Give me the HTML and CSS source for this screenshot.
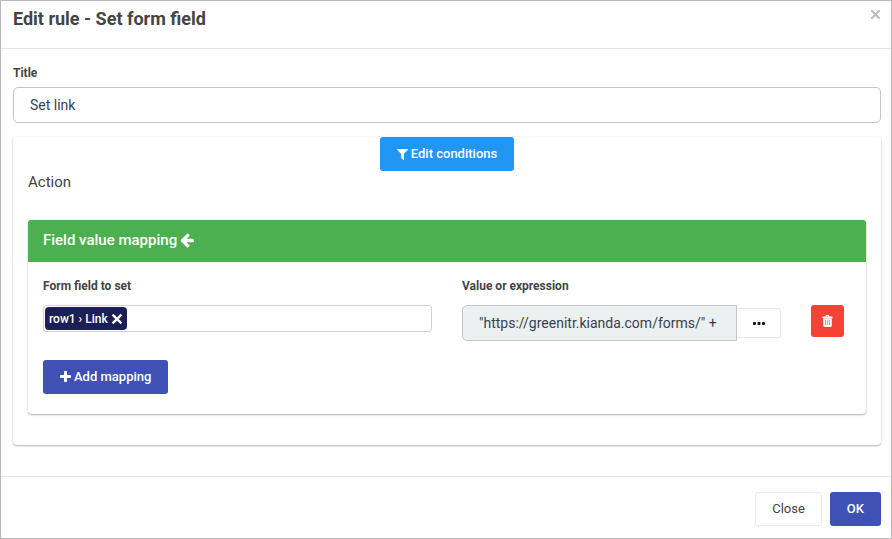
FILE: index.html
```html
<!DOCTYPE html>
<html lang="en">
<head>
<meta charset="utf-8">
<title>Edit rule - Set form field</title>
<meta name="viewport" content="width=device-width, initial-scale=1">
<link rel="stylesheet" href="styles.css">
</head>
<body>
<form class="dialog">
  <header class="dialog-header">
    <h1 class="dialog-title">Edit rule - Set form field</h1>
    <button type="button" class="dismiss" aria-label="Dismiss">
      <svg class="dismiss-icon" viewBox="0 0 10 10" aria-hidden="true"><path d="M1.2 1.2l7.6 7.6M8.8 1.2l-7.6 7.6"/></svg>
    </button>
  </header>

  <main class="dialog-body">
    <label class="label" for="title">Title</label>
    <input class="control" id="title" type="text" value="Set link">

    <section class="card">
      <div class="card-top">
        <button type="button" class="button button-info">
          <svg class="icon" viewBox="190 0 1412 1792" aria-hidden="true"><path d="M1595 295q17 41-14 70l-493 493v742q0 42-39 59-13 5-25 5-27 0-45-19l-256-256q-19-19-19-45v-486l-493-493q-31-29-14-70 17-39 59-39h1280q42 0 59 39z"/></svg>
          <span>Edit conditions</span>
        </button>
      </div>
      <h2 class="section-title">Action</h2>

      <section class="panel">
        <h3 class="panel-heading">
          <span>Field value mapping</span>
          <svg class="arrow-icon" viewBox="0 0 1792 1792" aria-hidden="true"><path d="M1664 896v128q0 53-32.5 90.5t-84.5 37.5h-704l293 294q38 36 38 90t-38 90l-75 76q-37 37-90 37-52 0-91-37l-651-652q-37-37-37-90 0-52 37-91l651-650q38-38 91-38 52 0 90 38l75 74q38 38 38 91t-38 91l-293 293h704q52 0 84.5 37.5t32.5 90.5z"/></svg>
        </h3>
        <div class="mapping">
          <div class="cell">
            <label class="label" for="field">Form field to set</label>
            <div class="token-box">
              <span class="token">row1 › Link
                <button type="button" class="token-remove" aria-label="Remove row1 › Link"><svg class="token-icon" viewBox="0 0 10 10" aria-hidden="true"><path d="M1.3 1.3l7.4 7.4M8.7 1.3l-7.4 7.4"/></svg></button>
              </span>
              <input class="token-input" id="field" type="text">
            </div>
          </div>
          <div class="cell">
            <label class="label" for="value">Value or expression</label>
            <div class="input-group">
              <input class="control control-readonly" id="value" type="text" value="&quot;https://greenitr.kianda.com/forms/&quot; +" readonly>
              <button type="button" class="more" aria-label="Edit expression">
                <svg class="dots-icon" viewBox="0 0 12 4" aria-hidden="true"><rect width="3" height="3" y="1" rx=".8"/><rect width="3" height="3" x="4.5" y="1" rx=".8"/><rect width="3" height="3" x="9" y="1" rx=".8"/></svg>
              </button>
            </div>
          </div>
          <div class="cell cell-action">
            <button type="button" class="delete" aria-label="Delete mapping">
              <svg class="trash-icon" viewBox="0 0 11 12" aria-hidden="true"><path d="M3.6 1.5V1q0-1 1-1h1.8q1 0 1 1v.5H10q.6 0 .6.6v1.1H.4V2.100q0-.6.6-.6zM4.700 1.500h1.600V1H4.700zM1.200 3.600h8.600v6.900q0 1.500-1.500 1.500H2.700q-1.500 0-1.500-1.500z"/><path class="trash-slots" d="M3.500 5v5M5.500 5v5M7.500 5v5"/></svg>
            </button>
          </div>
        </div>
        <div class="panel-actions">
          <button type="button" class="button button-primary">
            <svg class="icon" viewBox="190 0 1412 1792" aria-hidden="true"><path d="M1600 736v192q0 40-28 68t-68 28h-416v416q0 40-28 68t-68 28h-192q-40 0-68-28t-28-68v-416h-416q-40 0-68-28t-28-68v-192q0-40 28-68t68-28h416v-416q0-40 28-68t68-28h192q40 0 68 28t28 68v416h416q40 0 68 28t28 68z"/></svg>
            <span>Add mapping</span>
          </button>
        </div>
      </section>
    </section>
  </main>

  <footer class="dialog-footer">
    <button type="button" class="button button-default">Close</button>
    <button type="submit" class="button button-primary">OK</button>
  </footer>
</form>
</body>
</html>
```
FILE: styles.css
```css
*,
*::before,
*::after {
  box-sizing: border-box;
}

body {
  margin: 0;
  background: #fff;
  color: #444;
  font-family: Roboto, "Liberation Sans", sans-serif;
  font-size: 14px;
  line-height: 20px;
}

button,
input {
  margin: 0;
  font: inherit;
}

button {
  cursor: pointer;
}

svg {
  display: block;
  flex: none;
  fill: currentColor;
}

.dialog {
  display: flex;
  flex-direction: column;
  min-height: 100vh;
  border: 1px solid #b9b9b9;
}

.dialog-header {
  display: flex;
  justify-content: space-between;
  align-items: flex-start;
  padding: 6px 10px 18px 12px;
  border-bottom: 1px solid #e5e5e5;
}

.dialog-title {
  margin: 0;
  font-size: 18px;
  font-weight: 700;
  line-height: 23px;
}

.dismiss {
  padding: 2px 0;
  border: 0;
  background: none;
  color: #bdbdbd;
}

.dismiss-icon {
  width: 11px;
  height: 11px;
  fill: none;
  stroke: currentColor;
  stroke-width: 2;
}

.dialog-body {
  flex: 1;
  padding: 16px 10px 30px 12px;
}

.label {
  display: block;
  margin-bottom: 6px;
  font-size: 12px;
  font-weight: 700;
  line-height: 16px;
}

.control {
  display: block;
  width: 100%;
  height: 36px;
  padding: 6px 16px;
  border: 1px solid #c4c4c6;
  border-radius: 5px;
  background: #fff;
  color: #3a3f51;
}

.card {
  margin-top: 14px;
  padding: 0 15px 31px;
  border-radius: 4px;
  box-shadow: 0 1px 2px rgba(0, 0, 0, 0.3), 0 0 2px rgba(0, 0, 0, 0.05);
}

.card-top {
  display: flex;
  justify-content: center;
}

.button {
  display: inline-flex;
  align-items: center;
  gap: 3px;
  height: 34px;
  padding: 6px 16px;
  border: 1px solid transparent;
  border-radius: 3px;
  font-size: 13px;
  font-weight: 500;
}

.button-info {
  background: #2196f3;
  color: #fff;
}

.button-primary {
  background: #3f51b5;
  color: #fff;
}

.button-default {
  border-color: #eaeaea;
  background: #fff;
  color: #444;
  font-weight: 400;
}

.icon {
  width: 11px;
  height: 14px;
}

.section-title {
  margin: 0;
  padding: 1px 0 27px;
  font-size: 15px;
  font-weight: 400;
  line-height: 21px;
}

.panel {
  border-radius: 4px;
  box-shadow: 0 1px 2px rgba(0, 0, 0, 0.3), 0 0 2px rgba(0, 0, 0, 0.05);
}

.panel-heading {
  display: flex;
  align-items: center;
  gap: 2px;
  margin: 0;
  padding: 10px 15px 12px;
  border-radius: 3px 3px 0 0;
  background: #4caf50;
  color: #fff;
  font-size: 15px;
  font-weight: 500;
  line-height: 20px;
}

.arrow-icon {
  width: 16px;
  height: 16px;
}

.mapping {
  display: grid;
  grid-template-columns: 6fr 5fr 1fr;
  padding-top: 16px;
}

.cell {
  min-width: 0;
  padding: 0 15px;
}

.cell-action {
  padding-top: 27px;
}

.mapping .label {
  margin-bottom: 11px;
}

.token-box {
  display: flex;
  height: 27px;
  padding: 1px;
  border: 1px solid #d2d2d4;
  border-radius: 3px;
}

.token {
  display: inline-flex;
  align-items: center;
  gap: 3px;
  padding: 0 4px;
  border-radius: 4px;
  background: #1a1f56;
  color: #fff;
  font-size: 12px;
  font-weight: 500;
  white-space: nowrap;
}

.token-remove {
  padding: 0;
  border: 0;
  background: none;
  color: inherit;
}

.token-icon {
  width: 12px;
  height: 12px;
  fill: none;
  stroke: currentColor;
  stroke-width: 2;
}

.token-input {
  flex: 1;
  min-width: 0;
  border: 0;
  background: none;
  outline: 0;
}

.input-group {
  display: flex;
  align-items: center;
}

.control-readonly {
  flex: 1;
  min-width: 0;
  border-radius: 5px 0 0 5px;
  background: #ecf0f1;
}

.more {
  display: flex;
  justify-content: center;
  align-items: center;
  width: 44px;
  height: 30px;
  padding: 0;
  border: 1px solid #e4eaec;
  border-left: 0;
  border-radius: 0 3px 3px 0;
  background: #fff;
  color: #111;
}

.dots-icon {
  width: 12px;
  height: 4px;
}

.delete {
  display: flex;
  justify-content: center;
  align-items: center;
  width: 33px;
  height: 32px;
  padding: 0 0 1px;
  border: 0;
  border-radius: 3px;
  background: #f44336;
  color: #fff;
}

.trash-icon {
  width: 11px;
  height: 12px;
}

.trash-slots {
  stroke: #f44336;
  stroke-width: 1;
  stroke-opacity: 0.6;
}

.panel-actions {
  padding: 19px 15px 20px;
}

.panel-actions .button {
  display: flex;
}

.dialog-footer {
  display: flex;
  justify-content: flex-end;
  gap: 8px;
  padding: 15px 10px 12px;
  border-top: 1px solid #e5e5e5;
}
```
